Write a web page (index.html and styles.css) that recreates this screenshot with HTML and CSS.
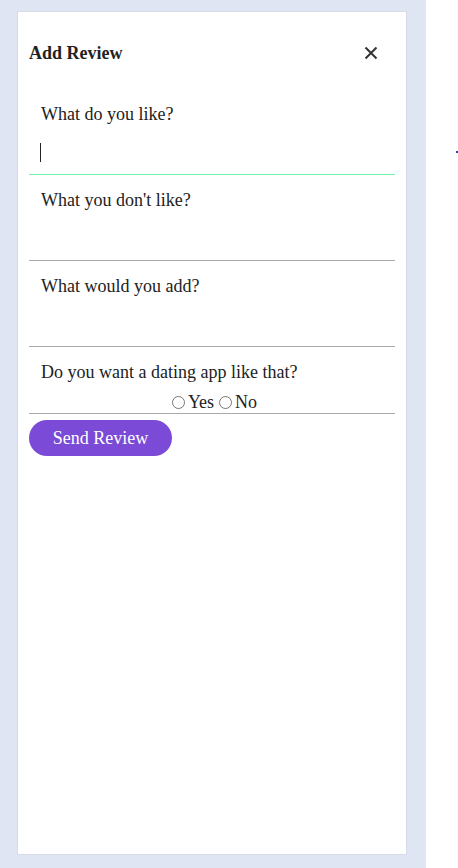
FILE: index.html
```html
<!DOCTYPE html>
<html>
<head>
<meta charset="utf-8">
<link rel="stylesheet" href="styles.css">
</head>
<body>
<div class="page">
  <div class="panel">
    <div class="card">
      <div class="header">
        <h2 class="title">Add Review</h2>
        <svg class="close" width="14" height="14" viewBox="0 0 14 14"><path d="M1.5 1.5 L12.5 12.5 M12.5 1.5 L1.5 12.5" stroke="#333" stroke-width="2" fill="none"/></svg>
      </div>
      <form class="form">
        <div class="field">
          <label class="label">What do you like?</label>
          <div class="input focused"><span class="caret"></span></div>
        </div>
        <div class="field">
          <label class="label">What you don't like?</label>
          <div class="input"></div>
        </div>
        <div class="field">
          <label class="label">What would you add?</label>
          <div class="input"></div>
        </div>
        <div class="field last">
          <label class="label">Do you want a dating app like that?</label>
          <div class="radios"><span class="radio"></span>Yes<span class="radio"></span>No</div>
        </div>
        <button type="button" class="send">Send Review</button>
      </form>
    </div>
  </div>
  <div class="side"><span class="dot"></span></div>
</div>
</body>
</html>
```

FILE: styles.css
```css
* { box-sizing: border-box; }
html, body { margin: 0; padding: 0; background: #fff; }
body { font-family: "Liberation Serif", "Times New Roman", serif; color: #222; }
.page { display: flex; width: 458px; height: 868px; }
.panel {
  width: 426px;
  height: 868px;
  background: #dfe5f2;
  padding: 11px 19px 13px 17px;
}
.card {
  height: 844px;
  background: #fff;
  border: 1px solid #d5dbe7;
  padding: 26px 11px 0 11px;
}
.header {
  display: flex;
  justify-content: space-between;
  align-items: center;
  height: 30px;
  padding-right: 17px;
}
.title { margin: 0; font-size: 18px; font-weight: bold; color: #222; }
.close { display: block; }
.form { margin-top: 21px; }
.field { padding-top: 15px; border-bottom: 1px solid #aaa; }
.label { display: block; margin-left: 12px; font-size: 18px; line-height: 21px; color: #222; }
.input { height: 49px; padding-left: 11px; display: flex; align-items: center; }
.field:first-child { border-bottom-color: #6ff3a9; }
.caret { display: block; width: 1px; height: 19px; background: #222; margin-top: 6px; }
.radios { text-align: center; font-size: 18px; line-height: 21px; margin-top: 9px; }
.radio {
  display: inline-block;
  width: 13px; height: 13px;
  border: 1px solid #767676;
  border-radius: 50%;
  margin: 0 3px 0 5px;
  vertical-align: -1px;
}
.send {
  margin-top: 6px;
  width: 143px;
  height: 36px;
  border: none;
  border-radius: 18px;
  background: #7b4ad6;
  color: #fff;
  font-family: "Liberation Serif", "Times New Roman", serif;
  font-size: 18px;
  padding: 0;
}
.side { flex: 1; }
.dot { display: block; width: 2px; height: 2px; background: #2a3fd6; margin: 151px 0 0 30px; }
```
